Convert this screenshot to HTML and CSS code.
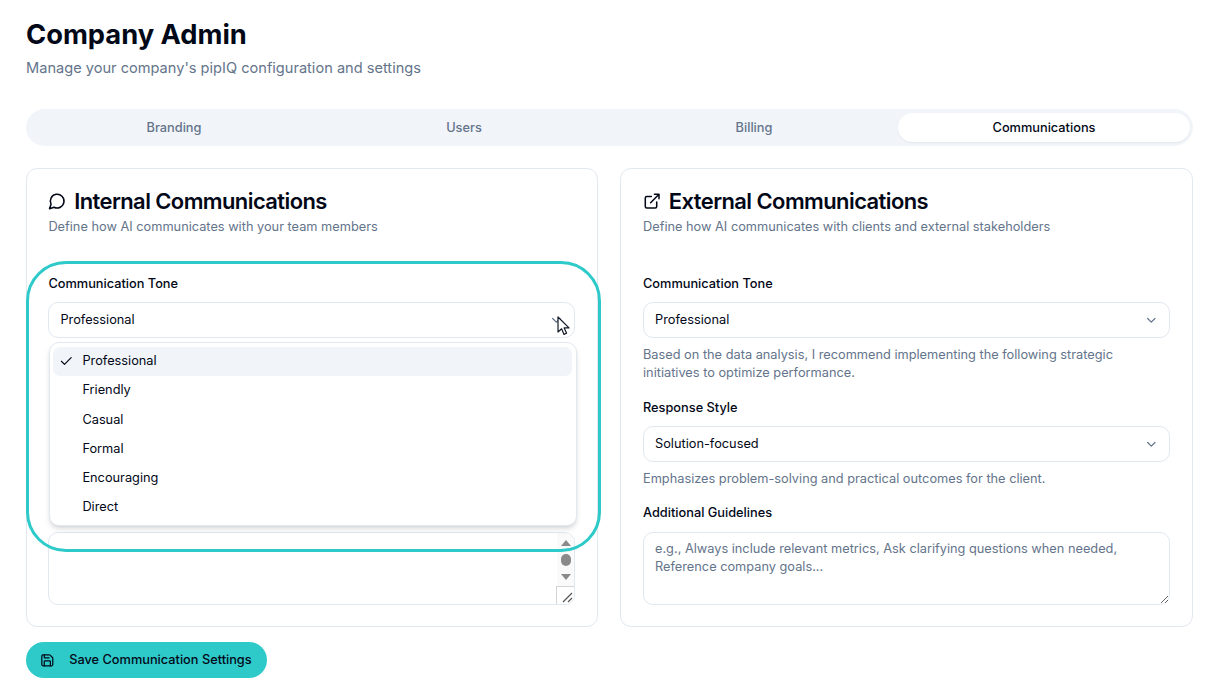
FILE: index.html
```html
<!DOCTYPE html>
<html lang="en">
<head>
<meta charset="utf-8">
<title>Company Admin</title>
<link rel="stylesheet" href="styles.css">
</head>
<body>
<main class="page">
  <header class="page-head">
    <h1>Company Admin</h1>
    <p>Manage your company's pipIQ configuration and settings</p>
  </header>
  <nav class="tabs">
    <div class="tab">Branding</div>
    <div class="tab">Users</div>
    <div class="tab">Billing</div>
    <div class="tab active">Communications</div>
  </nav>
  <div class="cards">
    <section class="card card-left">
      <h2><svg class="title-icon" viewBox="0 0 24 24"><path d="M7.9 20A9 9 0 1 0 4 16.1L2 22Z"/></svg>Internal Communications</h2>
      <p class="sub">Define how AI communicates with your team members</p>
      <div class="form">
        <div class="focus-field">
          <label>Communication Tone</label>
          <div class="select">Professional<svg class="chev" viewBox="0 0 24 24"><path d="m6 9 6 6 6-6"/></svg></div>
          <div class="menu">
            <div class="item selected"><svg class="check" viewBox="0 0 24 24"><path d="M20 6 9 17l-5-5"/></svg>Professional</div>
            <div class="item">Friendly</div>
            <div class="item">Casual</div>
            <div class="item">Formal</div>
            <div class="item">Encouraging</div>
            <div class="item">Direct</div>
          </div>
          <svg class="cursor" viewBox="0 0 14 20"><path d="M1 1v15l3.6-3.2 2.4 5.6 2.6-1.1-2.4-5.4H12Z"/></svg>
        </div>
        <div class="textbox scroll-box">
          <div class="scrollbar">
            <span class="arrow up"></span>
            <span class="thumb"></span>
            <span class="arrow down"></span>
          </div>
          <div class="resizer"><svg viewBox="0 0 18 18"><path d="M6 15 15 6M11 15l4-4"/></svg></div>
        </div>
      </div>
      <div class="ring"></div>
    </section>
    <section class="card">
      <h2><svg class="title-icon" viewBox="0 0 24 24"><path d="M15 3h6v6M10 14 21 3M18 13v6a2 2 0 0 1-2 2H5a2 2 0 0 1-2-2V8a2 2 0 0 1 2-2h6"/></svg>External Communications</h2>
      <p class="sub">Define how AI communicates with clients and external stakeholders</p>
      <div class="form">
        <label>Communication Tone</label>
        <div class="select">Professional<svg class="chev" viewBox="0 0 24 24"><path d="m6 9 6 6 6-6"/></svg></div>
        <p class="hint">Based on the data analysis, I recommend implementing the following strategic initiatives to optimize performance.</p>
        <label class="next">Response Style</label>
        <div class="select">Solution-focused<svg class="chev" viewBox="0 0 24 24"><path d="m6 9 6 6 6-6"/></svg></div>
        <p class="hint">Emphasizes problem-solving and practical outcomes for the client.</p>
        <label class="next">Additional Guidelines</label>
        <textarea class="textbox" placeholder="e.g., Always include relevant metrics, Ask clarifying questions when needed, Reference company goals..."></textarea>
      </div>
    </section>
  </div>
  <button class="save"><svg viewBox="0 0 24 24"><path d="M15.2 3a2 2 0 0 1 1.4.6l3.8 3.8a2 2 0 0 1 .6 1.4V19a2 2 0 0 1-2 2H5a2 2 0 0 1-2-2V5a2 2 0 0 1 2-2z"/><path d="M17 21v-7a1 1 0 0 0-1-1H8a1 1 0 0 0-1 1v7"/><path d="M7 3v4a1 1 0 0 0 1 1h7"/></svg><span class="save-label">Save Communication Settings</span></button>
</main>
</body>
</html>
```
FILE: styles.css
```css
* { box-sizing: border-box; }
html, body { margin: 0; height: 100%; overflow: hidden; background: #fff; }
body { font-family: Inter, "Liberation Sans", sans-serif; color: #020817; }
.page { padding: 18px 13px 0 26px; }
.page-head h1 { margin: 0; font-size: 27.3px; line-height: 33px; font-weight: 700; }
.page-head p { margin: 6px 0 0; font-size: 14.6px; line-height: 22px; color: #64748b; }
.tabs { margin-top: 30px; height: 37px; padding: 4px 4px 4px 3px; display: grid; grid-template-columns: repeat(4, 1fr); background: #f1f5f9; border-radius: 19px; }
.tab { display: flex; align-items: center; justify-content: center; font-size: 12.77px; font-weight: 500; color: #64748b; border-radius: 15px; }
.tab.active { background: #fff; color: #020817; box-shadow: 0 1px 2px rgba(0,0,0,.06); margin: 0 -1px; }
.cards { margin-top: 22px; display: grid; grid-template-columns: 572px 573px; gap: 22px; }
.card { position: relative; height: 459px; padding: 21px 22px 22px; border: 1px solid #e2e8f0; border-radius: 11px; background: #fff; }
.card-left { padding-left: 21.4px; }
.card h2 { margin: 0; display: flex; align-items: center; gap: 7.5px; font-size: 21.94px; line-height: 22px; font-weight: 600; letter-spacing: -.57px; }
.title-icon { width: 18.3px; height: 18.3px; flex: none; fill: none; stroke: #020817; stroke-width: 2; stroke-linecap: round; stroke-linejoin: round; }
.sub { margin: 6px 0 0; font-size: 12.77px; line-height: 18.3px; color: #64748b; }
.form { margin-top: 40.7px; position: relative; }
label { display: block; font-size: 12.77px; line-height: 14px; font-weight: 500; }
label.next { margin-top: 18px; }
.select { position: relative; height: 36px; margin-top: 11px; padding: 0 11px; display: flex; align-items: center; border: 1px solid #e2e8f0; border-radius: 10px; font-size: 12.77px; background: #fff; }
.chev { position: absolute; right: 10.5px; top: 10.5px; width: 14.6px; height: 14.6px; fill: none; stroke: #64748b; stroke-width: 2; stroke-linecap: round; stroke-linejoin: round; }
.hint { margin: 8px 0 0; font-size: 12.77px; line-height: 18.3px; color: #64748b; }
.focus-field { position: relative; }
.menu { position: absolute; top: 65px; left: 1px; width: 528px; height: 184px; padding: 4px 4px 4px 3px; background: #fff; border: 1px solid #e2e8f0; border-radius: 10px; box-shadow: 0 4px 6px -1px rgba(0,0,0,.12), 0 2px 4px -2px rgba(0,0,0,.12); z-index: 2; }
.item { position: relative; height: 29.25px; padding: 0 0 2px 29px; display: flex; align-items: center; font-size: 12.77px; border-radius: 7px; }
.item.selected { background: #f1f5f9; }
.check { position: absolute; left: 6px; top: 7.5px; width: 14.6px; height: 14.6px; fill: none; stroke: #020817; stroke-width: 2; stroke-linecap: round; stroke-linejoin: round; }
.cursor { position: absolute; left: 508.6px; top: 39px; width: 14px; height: 20px; z-index: 3; fill: #fff; stroke: #111827; stroke-width: 1.2; stroke-linejoin: round; }
.textbox { display: block; width: 100%; height: 73px; margin-top: 12px; padding: 7px 11px; border: 1px solid #e2e8f0; border-radius: 10px; font: 12.77px/18.3px Inter, "Liberation Sans", sans-serif; color: #020817; background: #fff; outline: none; }
.textbox::placeholder { color: #64748b; opacity: 1; }
.scroll-box { position: relative; margin-top: 194px; overflow: hidden; }
.scrollbar { position: absolute; top: 0; right: 0; bottom: 0; width: 17px; background: #fafafa; display: flex; flex-direction: column; align-items: center; padding-top: 7px; }
.arrow { width: 0; height: 0; border-left: 5.5px solid transparent; border-right: 5.5px solid transparent; }
.arrow.up { border-bottom: 6px solid #8a8a8a; }
.arrow.down { border-top: 6px solid #8a8a8a; margin-top: 8px; }
.thumb { width: 10px; height: 12px; margin-top: 8px; border-radius: 5px; background: #8a8a8a; }
.resizer { position: absolute; right: 0; bottom: 0; width: 18px; height: 18px; background: #fff; border: 1px solid #d4d4d4; border-right: 0; border-bottom: 0; }
.resizer svg { display: block; width: 18px; height: 18px; fill: none; stroke: #555; stroke-width: 1.2; }
.ring { position: absolute; left: -1px; top: 92px; width: 575px; height: 291px; border: 3px solid #2ec9c9; border-radius: 40px; pointer-events: none; z-index: 4; }
.save { margin-top: 15px; height: 36px; width: 241px; padding: 0 0 0 14px; display: flex; align-items: center; gap: 14.6px; border: 0; border-radius: 18px; background: #2ec9c9; color: #020817; font: 500 12.77px Inter, "Liberation Sans", sans-serif; }
.save svg { width: 14.6px; height: 14.6px; flex: none; fill: none; stroke: #020817; stroke-width: 2; stroke-linecap: round; stroke-linejoin: round; }
.save-label { margin-top: -1px; }
```
